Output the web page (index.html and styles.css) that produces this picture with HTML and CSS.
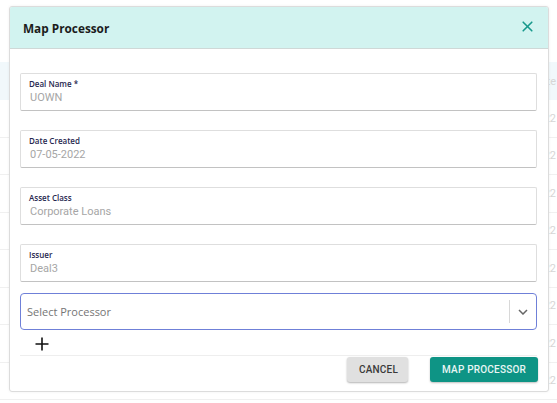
FILE: index.html
```html
<!DOCTYPE html>
<html>
<head>
<meta charset="utf-8">
<link rel="stylesheet" href="styles.css">
</head>
<body>
<div class="page">
  <div class="bg-table">
    <div class="bg-head"><span class="bg-cell">Date</span></div>
    <div class="bg-row"><span class="bg-cell">2022</span></div>
    <div class="bg-row"><span class="bg-cell">2022</span></div>
    <div class="bg-row"><span class="bg-cell">2022</span></div>
    <div class="bg-row"><span class="bg-cell">2022</span></div>
    <div class="bg-row"><span class="bg-cell">2022</span></div>
    <div class="bg-row"><span class="bg-cell">2022</span></div>
    <div class="bg-row"><span class="bg-cell">2022</span></div>
    <div class="bg-row"><span class="bg-cell">2022</span></div>
  </div>

  <div class="modal">
    <div class="modal-header">
      <h2 class="modal-title">Map Processor</h2>
      <svg class="close" width="11" height="11" viewBox="0 0 11 11"><path d="M1.2 1.2 L9.8 9.8 M9.8 1.2 L1.2 9.8" stroke="#17998c" stroke-width="1.6" stroke-linecap="round"/></svg>
    </div>
    <div class="modal-body">
      <div class="field">
        <div class="label">Deal Name *</div>
        <div class="value">UOWN</div>
      </div>
      <div class="field">
        <div class="label">Date Created</div>
        <div class="value">07-05-2022</div>
      </div>
      <div class="field">
        <div class="label">Asset Class</div>
        <div class="value">Corporate Loans</div>
      </div>
      <div class="field">
        <div class="label">Issuer</div>
        <div class="value">Deal3</div>
      </div>
      <div class="select">
        <span class="select-text">Select Processor</span>
        <span class="select-sep"></span>
        <svg class="chev" width="10" height="6" viewBox="0 0 10 6"><path d="M1 1 L5 5 L9 1" fill="none" stroke="#666" stroke-width="1.5"/></svg>
      </div>
      <div class="plus-row">
        <svg width="14" height="14" viewBox="0 0 14 14"><path d="M7 0.5 V13.5 M0.5 7 H13.5" stroke="#111" stroke-width="1.6"/></svg>
      </div>
      <div class="footer">
        <button class="btn btn-cancel">CANCEL</button>
        <button class="btn btn-primary">MAP PROCESSOR</button>
      </div>
    </div>
  </div>
</div>
</body>
</html>
```

FILE: styles.css
```css
* { box-sizing: border-box; }
html, body { margin: 0; padding: 0; }
body {
  width: 557px;
  height: 403px;
  overflow: hidden;
  background: #ffffff;
  font-family: "Open Sans", "Liberation Sans", sans-serif;
}
.page {
  position: relative;
  width: 557px;
  height: 403px;
}
.bg-table {
  padding-top: 62px;
}
.bg-head {
  height: 38px;
  background: #f1f8fb;
  display: flex;
  align-items: center;
  justify-content: flex-end;
}
.bg-row {
  height: 37.5px;
  border-bottom: 1px solid #f0f0f0;
  display: flex;
  align-items: center;
  justify-content: flex-end;
}
.bg-cell {
  font-family: "Roboto", "Liberation Sans", sans-serif;
  font-size: 11px;
  color: #d6d6d6;
  margin-right: 1px;
}
.modal {
  position: absolute;
  left: 9px;
  top: 6px;
  width: 540px;
  height: 386px;
  background: #ffffff;
  border: 1px solid #dcdcdc;
  border-radius: 3px;
  box-shadow: 0 0 3px rgba(0,0,0,0.06);
  overflow: hidden;
}
.modal-header {
  height: 42px;
  background: #d2f3f0;
  border-bottom: 1px solid #cfd8d7;
  display: flex;
  align-items: center;
  justify-content: space-between;
  padding: 0 15px 0 13px;
}
.modal-title {
  margin: 0;
  font-size: 11.8px;
  font-weight: 700;
  color: #1c1c1c;
}
.close { display: block; margin-top: -2px; }
.modal-body {
  padding: 24px 11px 0 10px;
}
.field {
  height: 38px;
  border: 1px solid #dedede;
  border-bottom: 1px solid #c2c2c2;
  border-radius: 2px;
  padding: 4px 0 0 8px;
  margin-bottom: 19px;
}
.label {
  font-size: 8px;
  font-weight: 600;
  color: #27284f;
  line-height: 11px;
}
.value {
  font-family: "Roboto", "Liberation Sans", sans-serif;
  font-size: 11px;
  color: #a6a6a6;
  line-height: 15px;
  margin-top: 1px;
  padding-left: 1px;
}
.field:nth-child(4) { margin-bottom: 11px; }
.select {
  height: 37px;
  border: 1px solid #6f80d8;
  border-radius: 4px;
  display: flex;
  align-items: center;
  padding: 0 8px 0 6px;
}
.select-text {
  flex: 1;
  font-size: 11px;
  color: #757575;
}
.select-sep {
  width: 1px;
  height: 23px;
  background: #d8d8d8;
  margin-right: 8px;
}
.chev { display: block; }
.plus-row {
  height: 26px;
  display: flex;
  align-items: center;
  padding: 3px 0 0 15px;
  border-bottom: 1px solid #eeeeee;
}
.plus-row svg { display: block; }
.footer {
  display: flex;
  justify-content: flex-end;
  gap: 22px;
  padding-top: 1px;
  margin-right: -1px;
}
.btn {
  height: 25px;
  border: none;
  border-radius: 3px;
  font-family: "Roboto", "Liberation Sans", sans-serif;
  font-size: 10px;
  font-weight: 500;
  letter-spacing: 0.2px;
  padding: 0 12px;
}
.btn-cancel {
  width: 61px;
  background: #e0e0e0;
  color: #3a3a3a;
  box-shadow: 0 1px 2px rgba(0,0,0,0.3);
}
.btn-primary {
  width: 108px;
  background: #0e9485;
  color: #e8f6f4;
  box-shadow: 0 1px 2px rgba(0,0,0,0.25);
}
```
